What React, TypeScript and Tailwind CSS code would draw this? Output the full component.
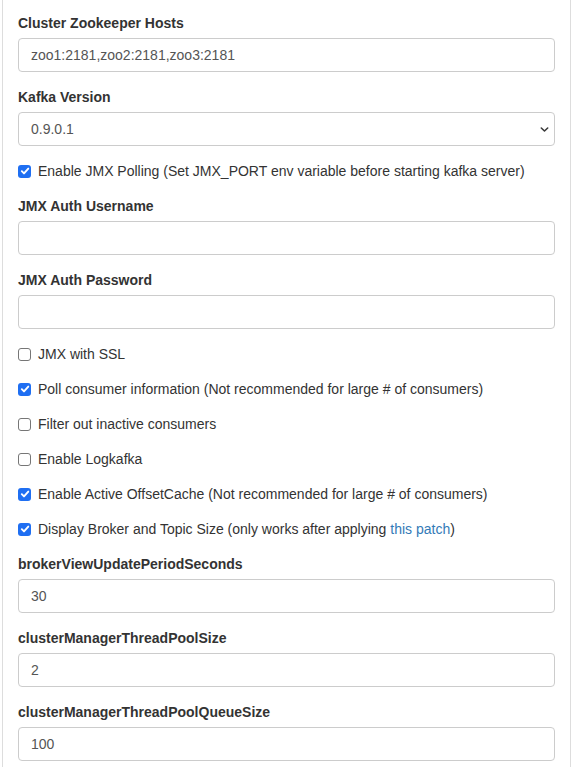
import React from 'react';

const font = { fontFamily: '"Liberation Sans", Arial, sans-serif' };

function Label({ children }: { children: React.ReactNode }) {
  return <div className="text-[14px] leading-[20px] font-bold text-[#333] mb-[5px]">{children}</div>;
}

function TextInput({ value = '' }: { value?: string }) {
  return (
    <div className="h-[34px] w-full border border-[#ccc] rounded-[4px] bg-white px-[12px] flex items-center text-[14px] text-[#555]">
      {value}
    </div>
  );
}

function Check({ checked, children }: { checked?: boolean; children: React.ReactNode }) {
  return (
    <div className="h-[20px] flex items-center text-[14px] leading-[20px] text-[#333]">
      {checked ? (
        <span className="w-[13px] h-[13px] rounded-[3px] bg-[#1f6ff2] flex items-center justify-center shrink-0">
          <svg width="10" height="10" viewBox="0 0 10 10" fill="none">
            <path d="M1.8 5.2 L4 7.4 L8.3 2.6" stroke="white" strokeWidth="1.9" strokeLinecap="round" strokeLinejoin="round" />
          </svg>
        </span>
      ) : (
        <span className="w-[13px] h-[13px] rounded-[3px] border border-[#767676] bg-white shrink-0" />
      )}
      <span className="ml-[7px]">{children}</span>
    </div>
  );
}

export default function App() {
  return (
    <div className="w-[574px] h-[767px] bg-white overflow-hidden" style={font}>
      <div className="ml-[2px] w-[569px] h-full border-x border-[#ddd] px-[15px] pt-[13px] flex flex-col gap-[15px]">
        <div>
          <Label>Cluster Zookeeper Hosts</Label>
          <TextInput value="zoo1:2181,zoo2:2181,zoo3:2181" />
        </div>
        <div>
          <Label>Kafka Version</Label>
          <div className="h-[34px] w-full border border-[#ccc] rounded-[4px] bg-white pl-[12px] pr-[5px] flex items-center justify-between text-[14px] text-[#555]">
            <span>0.9.0.1</span>
            <svg width="9" height="7" viewBox="0 0 9 7" fill="none">
              <path d="M1.3 2 L4.5 5 L7.7 2" stroke="#3a3a3a" strokeWidth="1.6" strokeLinecap="round" strokeLinejoin="round" />
            </svg>
          </div>
        </div>
        <Check checked>Enable JMX Polling (Set JMX_PORT env variable before starting kafka server)</Check>
        <div>
          <Label>JMX Auth Username</Label>
          <TextInput />
        </div>
        <div>
          <Label>JMX Auth Password</Label>
          <TextInput />
        </div>
        <Check>JMX with SSL</Check>
        <Check checked>Poll consumer information (Not recommended for large # of consumers)</Check>
        <Check>Filter out inactive consumers</Check>
        <Check>Enable Logkafka</Check>
        <Check checked>Enable Active OffsetCache (Not recommended for large # of consumers)</Check>
        <Check checked>
          Display Broker and Topic Size (only works after applying <a className="text-[#337ab7]">this patch</a>)
        </Check>
        <div>
          <Label>brokerViewUpdatePeriodSeconds</Label>
          <TextInput value="30" />
        </div>
        <div>
          <Label>clusterManagerThreadPoolSize</Label>
          <TextInput value="2" />
        </div>
        <div>
          <Label>clusterManagerThreadPoolQueueSize</Label>
          <TextInput value="100" />
        </div>
      </div>
    </div>
  );
}
